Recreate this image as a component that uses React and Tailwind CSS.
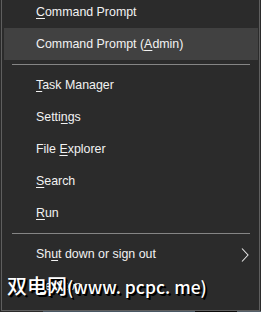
import React from 'react';

const Key = ({ children }) => (
  <span className="underline underline-offset-[2px] decoration-1">{children}</span>
);

const items = [
  { id: 'cmd', label: <><Key>C</Key>ommand Prompt</> },
  { id: 'admin', label: <>Command Prompt (<Key>A</Key>dmin)</>, active: true },
  { id: 'sep1', sep: true },
  { id: 'task', label: <><Key>T</Key>ask Manager</> },
  { id: 'settings', label: <>Setti<Key>n</Key>gs</> },
  { id: 'explorer', label: <>File <Key>E</Key>xplorer</> },
  { id: 'search', label: <><Key>S</Key>earch</> },
  { id: 'run', label: <><Key>R</Key>un</> },
  { id: 'sep2', sep: true },
  { id: 'shut', label: <>Sh<Key>u</Key>t down or sign out</>, arrow: true },
  { id: 'desktop', label: <><Key>D</Key>esktop</> },
];

function Row({ item }) {
  if (item.sep) {
    return (
      <div className="h-[9px] pt-1 pl-[10px]">
        <div className="w-[238px] h-px bg-[#858585]" />
      </div>
    );
  }
  return (
    <div
      className={`h-8 ml-[2px] mr-[1px] pl-8 pr-[9px] flex items-center justify-between ${
        item.active ? 'bg-[#414141]' : ''
      }`}
    >
      <span className="text-[12.4px] text-[#f2f2f2] leading-none pt-px">{item.label}</span>
      {item.arrow && (
        <svg width="8" height="14" viewBox="0 0 8 14" className="mt-px">
          <path d="M1 0.5 L7 7 L1 13.5" fill="none" stroke="#e6e6e6" strokeWidth="1.1" />
        </svg>
      )}
    </div>
  );
}

export default function App() {
  return (
    <div
      className="w-[261px] h-[312px] bg-[#2b2b2b] relative overflow-hidden flex flex-col"
      style={{ fontFamily: '"Liberation Sans", Arial, sans-serif' }}
    >
      <div className="ml-px w-[259px] h-[311px] border-x border-b border-[#5f5f5f] overflow-hidden">
        <div className="-mt-1">
          {items.map((item) => (
            <Row key={item.id} item={item} />
          ))}
        </div>
      </div>
      <div className="h-px flex">
        <div className="w-[43px] bg-[#2b2b2b]" />
        <div className="w-[152px] bg-[#4a5864]" />
        <div className="w-[42px] bg-[#0a0a0a]" />
        <div className="flex-1 bg-[#55606a]" />
      </div>

      <div
        className="absolute left-[7px] top-[276px] text-[20px] leading-[20px] font-medium text-white whitespace-nowrap [text-shadow:1px_1px_0_#000,2px_2px_0_#000]"
        style={{ fontFamily: '"Noto Sans CJK SC", sans-serif' }}
      >
        双电网<span className="text-[17.5px]">(www. pcpc. me)</span>
      </div>
    </div>
  );
}
